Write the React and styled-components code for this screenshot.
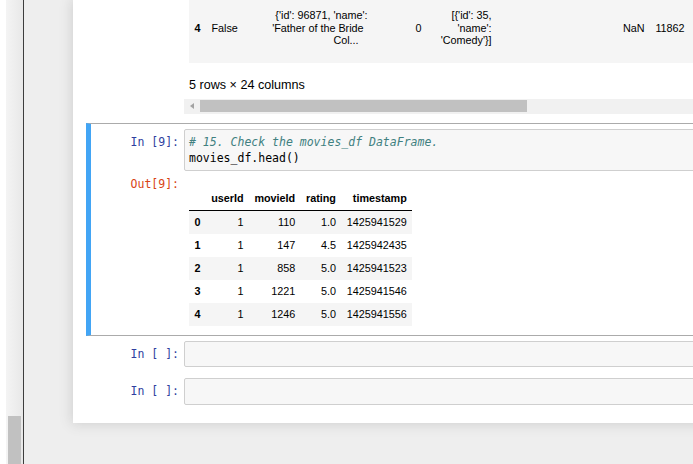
import React from 'react';
import styled, { createGlobalStyle } from 'styled-components';

const GlobalStyle = createGlobalStyle`
  html, body {
    margin: 0;
    padding: 0;
    height: 464px;
    overflow: hidden;
    background: #eee;
  }
  body {
    font-family: "Liberation Sans", Arial, sans-serif;
    color: #000;
  }
`;

const Page = styled.div`
  display: flex;
  align-items: flex-start;
  width: 693px;
  height: 464px;
  overflow: hidden;
  background: #eee;
`;

const WindowEdge = styled.div`
  flex: none;
  width: 6px;
  height: 100%;
  background: #fff;
`;

const VTrack = styled.div`
  flex: none;
  width: 17px;
  height: 100%;
  background: linear-gradient(to right, #f4f4f4, #e8e8e8);
  display: flex;
  flex-direction: column;
  justify-content: flex-end;
  align-items: center;
`;

const VThumb = styled.div`
  width: 13px;
  height: 48px;
  background: #c1c1c1;
`;

const Rule = styled.div`
  flex: none;
  width: 1px;
  height: 100%;
  background: #3d3d3d;
`;

const Gutter = styled.div`
  flex: none;
  width: 49px;
`;

const Panel = styled.div`
  flex: none;
  width: 700px;
  box-sizing: border-box;
  padding: 0 0 12.5px 13px;
  background: #fff;
  box-shadow: 0 0 12px 1px rgba(87, 87, 87, 0.2);
`;

const TopCell = styled.div`
  padding: 0 5px 9px 6px;
`;

const Cell = styled.div`
  border: 1px solid ${p => (p.$selected ? '#ababab' : 'transparent')};
  border-left: ${p => (p.$selected ? '5px solid #42a5f5' : '1px solid transparent')};
  padding: ${p => (p.$selected ? '5px 5px 4px 1px' : '4px 5px 5px 5px')};
`;

const Row = styled.div`
  display: flex;
  align-items: flex-start;
`;

const Prompt = styled.div`
  flex: none;
  width: 92px;
  box-sizing: border-box;
  padding: ${p => (p.$out ? '5px' : '5px')} 5px 0 0;
  text-align: right;
  font-family: "DejaVu Sans Mono", "Liberation Mono", monospace;
  font-size: 11.5px;
  line-height: 16.5px;
  color: ${p => (p.$out ? '#d84315' : '#303f9f')};
  white-space: nowrap;
`;

const InputArea = styled.div`
  flex: 1;
  min-width: 0;
  box-sizing: border-box;
  height: ${p => (p.$empty ? '26.5px' : 'auto')};
  padding: ${p => (p.$empty ? '3px 4px' : '4px 4px 3px')};
  background: #f7f7f7;
  border: 1px solid #cfcfcf;
  border-radius: 2px;
  font-family: "DejaVu Sans Mono", "Liberation Mono", monospace;
  font-size: 11.5px;
  line-height: 16.5px;
  white-space: pre;
  color: #000;
`;

const Comment = styled.span`
  color: #408080;
  font-style: italic;
`;

const Subarea = styled.div`
  flex: 1;
  min-width: 0;
  padding: 5px;
`;

const Scroller = styled.div`
  flex: 1;
  min-width: 0;
  overflow: hidden;
`;

const ScrollContent = styled.div`
  padding: 0 5px;
`;

const Frame = styled.table`
  border-collapse: collapse;
  border-spacing: 0;
  font-size: 10.8px;
  color: #000;
  margin-top: ${p => p.$mt || 0}px;
  table-layout: ${p => (p.$fixed ? 'fixed' : 'auto')};
`;

const HeadCell = styled.th`
  text-align: right;
  font-weight: bold;
  padding: 5px 5.4px;
  line-height: 13px;
  border-bottom: 1px solid #000;
`;

const BodyRow = styled.tr`
  &:nth-child(odd) {
    background: #f5f5f5;
  }
`;

const IndexCell = styled.th`
  text-align: right;
  font-weight: bold;
  padding: ${p => (p.$tall ? '9px 5.4px 16.5px' : '5px 5.4px')};
  line-height: ${p => (p.$tall ? '12.5px' : '13px')};
  vertical-align: middle;
`;

const DataCell = styled.td`
  text-align: right;
  padding: ${p => (p.$tall ? '9px 5.4px 16.5px' : '5px 5.4px')};
  line-height: ${p => (p.$tall ? '12.5px' : '13px')};
  vertical-align: middle;
  white-space: nowrap;
`;

const Line = styled.span`
  display: block;
  padding-right: ${p => p.$pad || 0}px;
`;

const Caption = styled.p`
  margin: 12.6px 0 0;
  font-size: 12.6px;
  line-height: 18px;
`;

const HTrack = styled.div`
  display: flex;
  align-items: center;
  height: 15px;
  margin-top: 5.4px;
  background: #f1f1f1;
`;

const ArrowButton = styled.div`
  flex: none;
  width: 16px;
  height: 15px;
  display: flex;
  align-items: center;
  justify-content: center;

  &::before {
    content: '';
    border-style: solid;
    border-width: 3.5px 4px 3.5px 0;
    border-color: transparent #a3a3a3 transparent transparent;
  }
`;

const HThumb = styled.div`
  flex: none;
  width: 327px;
  height: 12px;
  background: #c1c1c1;
`;

const wideCols = [17, 37, 130, 54, 70, 153, 40, 120];

const ratings = [
  ['0', '1', '110', '1.0', '1425941529'],
  ['1', '1', '147', '4.5', '1425942435'],
  ['2', '1', '858', '5.0', '1425941523'],
  ['3', '1', '1221', '5.0', '1425941546'],
  ['4', '1', '1246', '5.0', '1425941556'],
];

function WideFrameTail() {
  return (
    <Scroller>
      <ScrollContent>
        <Frame $fixed style={{ width: wideCols.reduce((a, b) => a + b, 0) }}>
          <colgroup>
            {wideCols.map((w, i) => (
              <col key={i} style={{ width: w }} />
            ))}
          </colgroup>
          <tbody>
            <BodyRow>
              <IndexCell $tall>4</IndexCell>
              <DataCell $tall>False</DataCell>
              <DataCell $tall>
                <Line>{"{'id': 96871, 'name':"}</Line>
                <Line $pad={4}>{"'Father of the Bride"}</Line>
                <Line $pad={9}>Col...</Line>
              </DataCell>
              <DataCell $tall>0</DataCell>
              <DataCell $tall>
                <Line>{"[{'id': 35,"}</Line>
                <Line>{"'name':"}</Line>
                <Line>{"'Comedy'}]"}</Line>
              </DataCell>
              <DataCell $tall>NaN</DataCell>
              <DataCell $tall>11862</DataCell>
              <DataCell $tall />
            </BodyRow>
          </tbody>
        </Frame>
        <Caption>5 rows × 24 columns</Caption>
      </ScrollContent>
      <HTrack>
        <ArrowButton />
        <HThumb />
      </HTrack>
    </Scroller>
  );
}

function RatingsFrame() {
  return (
    <Frame $mt={11}>
      <thead>
        <tr>
          <HeadCell />
          <HeadCell>userId</HeadCell>
          <HeadCell>movieId</HeadCell>
          <HeadCell>rating</HeadCell>
          <HeadCell>timestamp</HeadCell>
        </tr>
      </thead>
      <tbody>
        {ratings.map(([idx, ...cells]) => (
          <BodyRow key={idx}>
            <IndexCell>{idx}</IndexCell>
            {cells.map((c, i) => (
              <DataCell key={i}>{c}</DataCell>
            ))}
          </BodyRow>
        ))}
      </tbody>
    </Frame>
  );
}

function EmptyCell() {
  return (
    <Cell>
      <Row>
        <Prompt>{'In\u00a0[\u00a0]:'}</Prompt>
        <InputArea $empty />
      </Row>
    </Cell>
  );
}

export default function App() {
  return (
    <>
      <GlobalStyle />
      <Page>
        <WindowEdge />
        <VTrack>
          <VThumb />
        </VTrack>
        <Rule />
        <Gutter />
        <Panel>
          <TopCell>
            <Row>
              <Prompt $out />
              <WideFrameTail />
            </Row>
          </TopCell>

          <Cell $selected>
            <Row>
              <Prompt>In [9]:</Prompt>
              <InputArea>
                <Comment># 15. Check the movies_df DataFrame.</Comment>
                {'\n'}movies_df.head()
              </InputArea>
            </Row>
            <Row>
              <Prompt $out>Out[9]:</Prompt>
              <Subarea>
                <RatingsFrame />
              </Subarea>
            </Row>
          </Cell>

          <EmptyCell />
          <EmptyCell />
        </Panel>
      </Page>
    </>
  );
}
